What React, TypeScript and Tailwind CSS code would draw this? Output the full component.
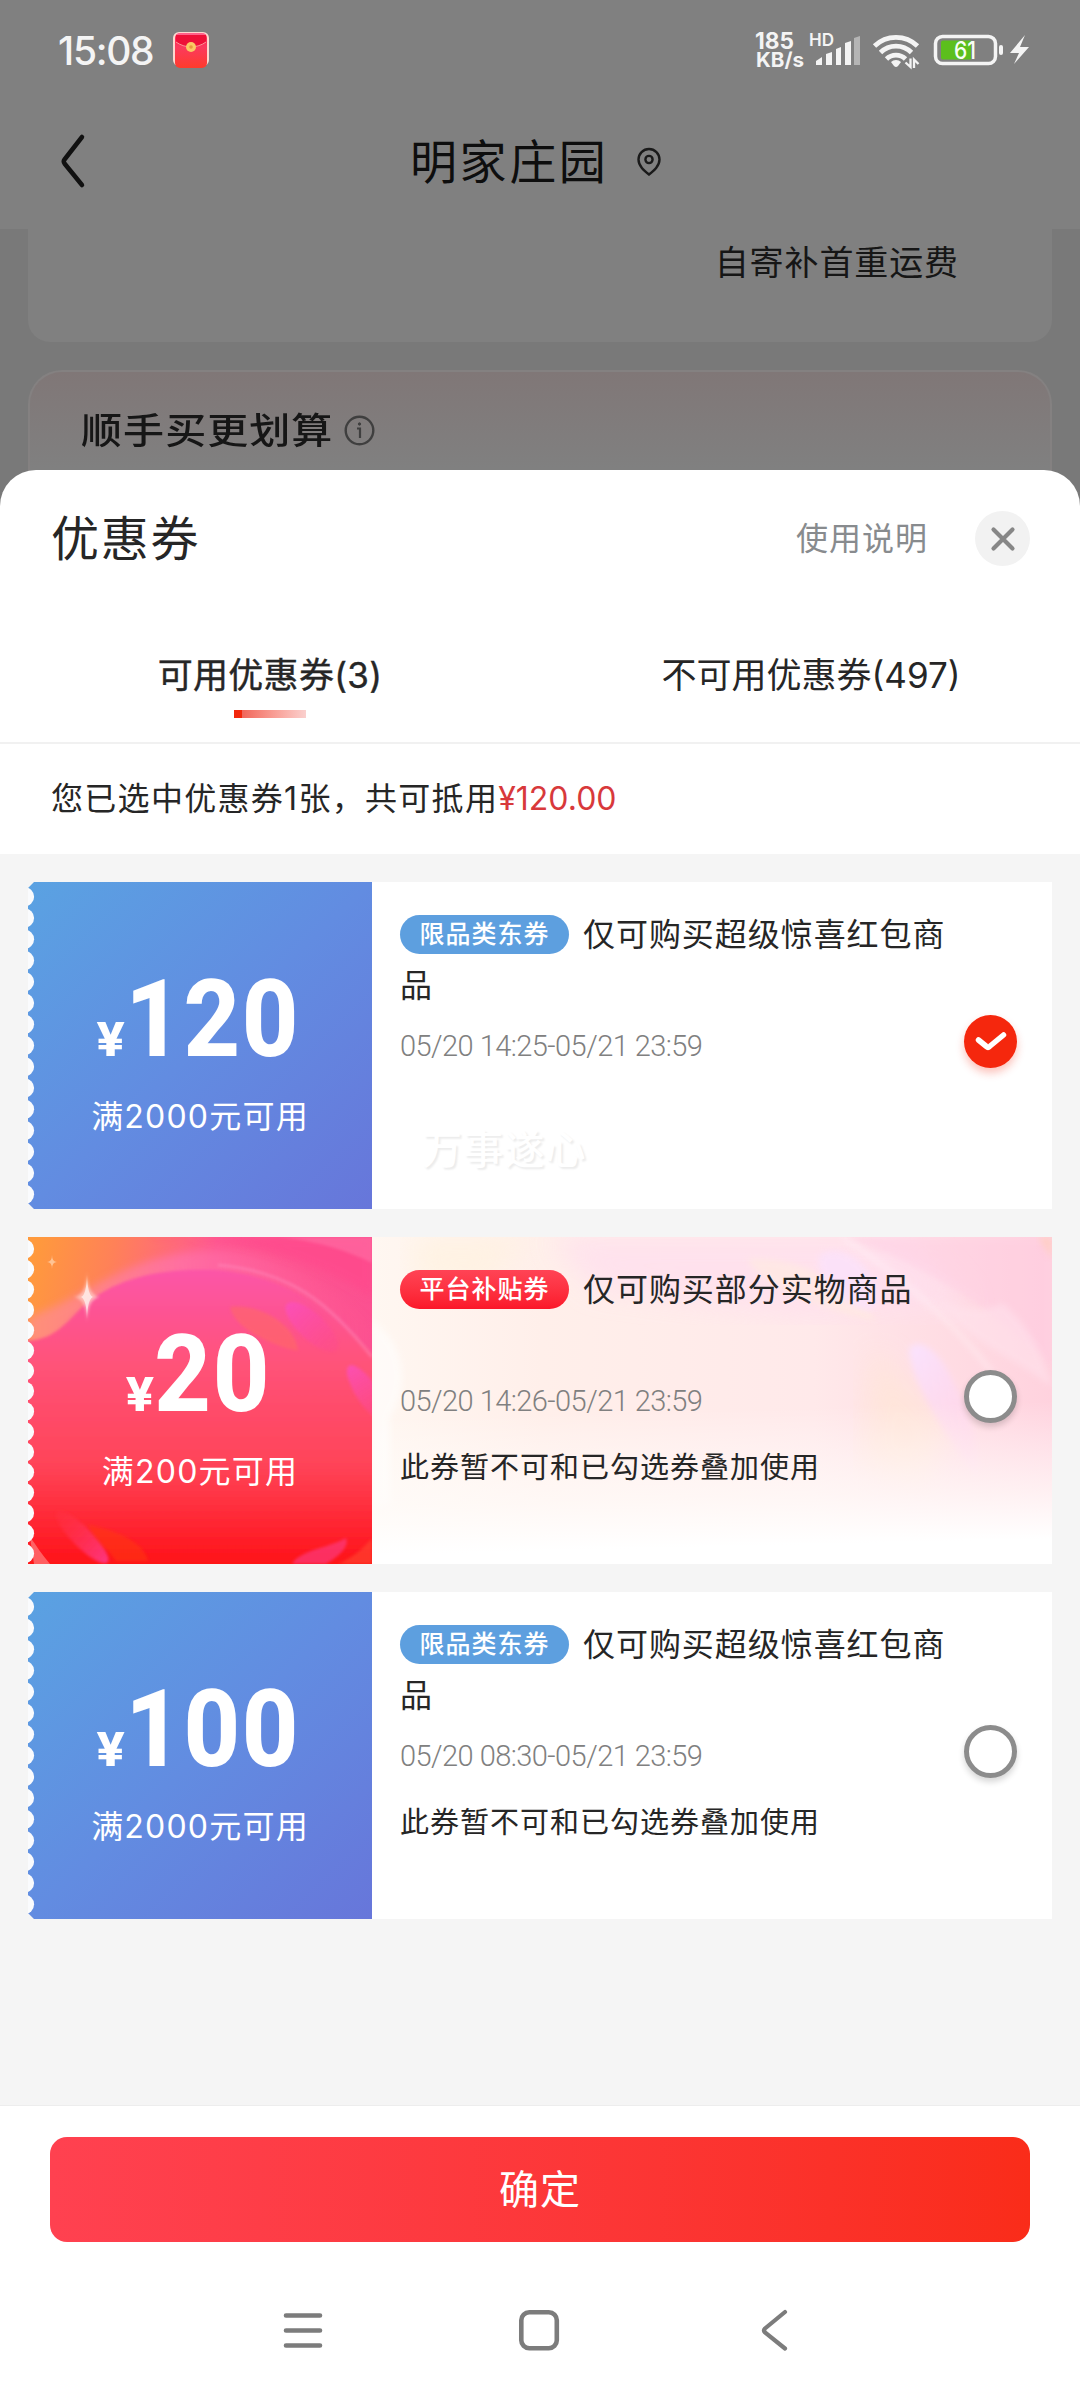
import { useId } from "react";

type Theme = "blue" | "red";

interface Coupon {
  id: number;
  theme: Theme;
  amount: string;
  threshold: string;
  tag: string;
  title: string;
  period: string;
  note?: string;
  selected?: boolean;
}

const coupons: Coupon[] = [
  {
    id: 1,
    theme: "blue",
    amount: "120",
    threshold: "满2000元可用",
    tag: "限品类东券",
    title: "仅可购买超级惊喜红包商品",
    period: "05/20 14:25-05/21 23:59",
    selected: true,
  },
  {
    id: 2,
    theme: "red",
    amount: "20",
    threshold: "满200元可用",
    tag: "平台补贴券",
    title: "仅可购买部分实物商品",
    period: "05/20 14:26-05/21 23:59",
    note: "此券暂不可和已勾选券叠加使用",
  },
  {
    id: 3,
    theme: "blue",
    amount: "100",
    threshold: "满2000元可用",
    tag: "限品类东券",
    title: "仅可购买超级惊喜红包商品",
    period: "05/20 08:30-05/21 23:59",
    note: "此券暂不可和已勾选券叠加使用",
  },
];

function StatusBar() {
  return (
    <div className="flex h-[100px] items-center justify-between pl-[58px] pr-[50px] text-[#f4f4f4]">
      <div className="flex items-center gap-[19px]">
        <span className="w-[96px] whitespace-nowrap text-[39px] font-medium leading-none tracking-[-1.300px]">15:08</span>
        <svg width="36" height="36" viewBox="0 0 36 36">
          <defs>
            <linearGradient id="envelope" x1="0" y1="0" x2="0" y2="1">
              <stop offset="0" stopColor="#ff1f4f" />
              <stop offset="0.4" stopColor="#fb3a5e" />
              <stop offset="1" stopColor="#ff3b2c" />
            </linearGradient>
          </defs>
          <rect width="36" height="34" rx="6" fill="#fdd9cf" />
          <rect x="2" y="1" width="32" height="35" rx="5" fill="url(#envelope)" />
          <path d="M3 3h30v7c-4 3-10 5-15 5S7 13 3 10z" fill="#ee1038" />
          <path d="M3 10c4 3 10 5 15 5s11-2 15-5" fill="none" stroke="#ffb0a8" strokeWidth="0.8" />
          <path d="M4 2h28" stroke="#ff9fc4" strokeWidth="1" />
          <circle cx="18" cy="15" r="5" fill="#fbc965" />
          <circle cx="18" cy="15" r="1.8" fill="#e99a3e" />
        </svg>
      </div>
      <svg className="overflow-visible" width="276" height="40" viewBox="754 30 276 40">
        <g fill="#f4f4f4" fontFamily="Inter, sans-serif" fontWeight="700">
          <text x="755" y="49" fontSize="22.500" textLength="39" lengthAdjust="spacingAndGlyphs">185</text>
          <text x="756" y="67" fontSize="20" textLength="48" lengthAdjust="spacingAndGlyphs">KB/s</text>
          <text x="809" y="46" fontSize="17" fontWeight="600" textLength="25" lengthAdjust="spacingAndGlyphs">HD</text>
        </g>
        <g fill="#f4f4f4">
          <path d="M816 65v-4l6-4v8z" />
          <path d="M826 65V54l6-2v13z" />
          <path d="M836 65V49l5-2v18z" />
          <path d="M845 65V43l6-2v24z" />
          <path d="M854 65V38l6-2v29z" fill="#b5b5b5" />
        </g>
        <g fill="none" stroke="#f4f4f4" strokeWidth="4.800">
          <path d="M874.500 46a31 31 0 0 1 43 0" />
          <path d="M880.500 52.500a22 22 0 0 1 31 0" />
          <path d="M886.500 59a13.500 13.500 0 0 1 19 0" />
        </g>
        <path d="M891 62a7 7 0 0 1 10 0l-3 4q-2 2-4 0z" fill="#f4f4f4" />
        <path d="M910.500 58.500V67l-5-4.500M914 68v-8.500l4.500 4.500" fill="none" stroke="#f4f4f4" strokeWidth="2.300" />
        <rect x="935.500" y="36.500" width="60" height="27" rx="7" fill="none" stroke="#f4f4f4" strokeWidth="3.500" />
        <path d="M943 40.500h28v19h-28a2 2 0 0 1-2-2v-15a2 2 0 0 1 2-2z" fill="#5cbf1c" />
        <rect x="999" y="45" width="4" height="10" rx="2" fill="#f4f4f4" />
        <path d="M1025 35l-15 18h9l-5 11 15-17h-9z" fill="#f4f4f4" />
        <text x="954" y="58.500" fontSize="24" fontWeight="500" fill="#f8fff4" fontFamily="Inter, sans-serif" textLength="22" lengthAdjust="spacingAndGlyphs">61</text>
      </svg>
    </div>
  );
}

function PageHeader() {
  return (
    <div className="flex h-[129px] items-center pb-[7px]">
      <svg className="ml-[58px]" width="28" height="56" viewBox="0 0 28 56">
        <path d="M24 4 6.500 26.500q-1.500 2 0 4L24 52" fill="none" stroke="#111" strokeWidth="4.500" strokeLinecap="round" />
      </svg>
      <h1 className="ml-[324px] w-[198px] whitespace-nowrap text-[47px] leading-none tracking-[2.600px] text-[#0e0e0e]">明家庄园</h1>
      <svg className="ml-[28px] mt-[2px]" width="26" height="30" viewBox="0 0 26 30">
        <path d="M13 27.500C8 23.500 2.500 19 2.500 12.500a10.500 10.500 0 0 1 21 0C23.500 19 18 23.500 13 27.500z" fill="none" stroke="#1a1a1a" strokeWidth="2.400" />
        <circle cx="13" cy="12.500" r="3.600" fill="none" stroke="#1a1a1a" strokeWidth="2.400" />
      </svg>
    </div>
  );
}

function OrderBackdrop() {
  return (
    <div className="flex h-[281px] flex-col gap-7 bg-[#797979] px-7">
      <div className="flex h-[113px] shrink-0 justify-end rounded-b-[22px] bg-[#808080] pr-[93px] pt-[17px]">
        <span className="text-[34px] leading-[34px] tracking-[0.9px] text-[#161616]">自寄补首重运费</span>
      </div>
      <div className="h-[140px] shrink-0 rounded-t-[34px] border-2 border-b-0 border-[#848181] bg-linear-to-b from-[#807777] to-[#808080] to-70% pl-[51px] pt-[41px]">
        <div className="flex items-center">
          <span className="w-[263px] origin-left scale-x-[1.14] whitespace-nowrap text-[36px] font-medium leading-[36px] tracking-[0.9px] text-[#161616]">
            顺手买更划算
          </span>
          <svg className="-mt-[2px]" width="31" height="31" viewBox="0 0 31 31" fill="none" stroke="#3f3f3f">
            <circle cx="15.500" cy="15.500" r="13.800" strokeWidth="2.400" />
            <path d="M13 13.500h3V23" strokeWidth="2.200" />
            <circle cx="15.500" cy="9" r="1.200" fill="#3f3f3f" strokeWidth="1" />
          </svg>
        </div>
      </div>
    </div>
  );
}

function SheetHeader() {
  return (
    <div className="flex h-[137px] items-center justify-between pl-[51px] pr-[50px]">
      <h2 className="text-[48px] leading-none tracking-[1.800px] text-[#262626]">优惠券</h2>
      <div className="flex items-center gap-[47px]">
        <span className="text-[32px] leading-none tracking-[1px] text-[#888b8e]">使用说明</span>
        <button className="flex size-[55px] items-center justify-center rounded-full bg-[#f2f2f2]">
          <svg width="26" height="26" viewBox="0 0 26 26">
            <path d="M3.500 3.500l19 19M22.500 3.500l-19 19" stroke="#878787" strokeWidth="4.200" strokeLinecap="round" />
          </svg>
        </button>
      </div>
    </div>
  );
}

function Tabs() {
  return (
    <div className="flex h-[137px] border-b-2 border-[#f1f1f1] pt-[50px] text-[35px] leading-[36px] text-[#262626]">
      <div className="flex w-1/2 flex-col items-center">
        <span className="tracking-[0.3px] [-webkit-text-stroke:0.4px_#262626]">可用优惠券(3)</span>
        <span className="mt-[17px] flex h-2 w-[72px]">
          <span className="w-2 bg-[#f2270c]" />
          <span className="flex-1 bg-linear-to-r from-[#f0655a] to-[#fad0ce]" />
        </span>
      </div>
      <div className="w-1/2 pl-[2px] text-center">不可用优惠券(497)</div>
    </div>
  );
}

// Torn left edge of a coupon
function Scallops({ count, pitch, first }: { count: number; pitch: number; first: number }) {
  return (
    <g fill="#fafbfd">
      {Array.from({ length: count }, (_, i) => (
        <circle key={i} cx={-3.5} cy={first + i * pitch} r={9.6} />
      ))}
    </g>
  );
}

function BlueArt() {
  const id = useId();
  return (
    <svg className="absolute inset-0" width="344" height="327" viewBox="0 0 344 327">
      <defs>
        <linearGradient id={id} x1="0" y1="0" x2="1" y2="1">
          <stop offset="0" stopColor="#5aa2e2" />
          <stop offset="0.5" stopColor="#628ce1" />
          <stop offset="1" stopColor="#6776da" />
        </linearGradient>
      </defs>
      <rect width="344" height="327" fill={`url(#${id})`} />
      <path d="M0 0h6l-6 6zM0 327h6l-6-6z" fill="#f5f5f5" />
      <Scallops count={15} pitch={21.26} first={14.7} />
    </svg>
  );
}

function RedArt() {
  return (
    <svg className="absolute inset-0" width="344" height="327" viewBox="0 0 344 327">
      <defs>
        <linearGradient id="outer" x1="0" y1="0.1" x2="1" y2="0.35">
          <stop offset="0" stopColor="#ff9a3c" />
          <stop offset="0.22" stopColor="#ff8158" />
          <stop offset="0.5" stopColor="#ff5a92" />
          <stop offset="1" stopColor="#fb5090" />
        </linearGradient>
        <linearGradient id="ball" x1="0" y1="0" x2="0" y2="1">
          <stop offset="0" stopColor="#fc54a8" />
          <stop offset="0.32" stopColor="#ff5278" />
          <stop offset="0.65" stopColor="#ff4358" />
          <stop offset="1" stopColor="#fe0f14" />
        </linearGradient>
        <linearGradient id="rim" x1="0" y1="0" x2="1" y2="0">
          <stop offset="0" stopColor="#ff8f8a" />
          <stop offset="0.45" stopColor="#ff72ac" />
          <stop offset="1" stopColor="#ff5590" stopOpacity="0.3" />
        </linearGradient>
        <linearGradient id="petal" x1="0" y1="0" x2="1" y2="0">
          <stop offset="0" stopColor="#fb4fc0" />
          <stop offset="1" stopColor="#fd4690" stopOpacity="0.35" />
        </linearGradient>
        <linearGradient id="petalLow" x1="0" y1="0" x2="1" y2="0">
          <stop offset="0" stopColor="#ff3a50" stopOpacity="0.2" />
          <stop offset="1" stopColor="#fd3f9c" />
        </linearGradient>
        <filter id="soft">
          <feGaussianBlur stdDeviation="4" />
        </filter>
        <filter id="softer">
          <feGaussianBlur stdDeviation="1.500" />
        </filter>
        <clipPath id="redFrame">
          <rect width="344" height="327" />
        </clipPath>
      </defs>
      <g clipPath="url(#redFrame)">
        <rect width="344" height="327" fill="url(#outer)" />
        <path d="M120 0C200-4 280 20 344 60V0z" fill="#ff4a8c" filter="url(#soft)" opacity="0.8" />
        <path d="M0 80C60 60 90 22 170 14c70-4 130 30 174 76v30H0z" fill="url(#rim)" filter="url(#soft)" opacity="0.75" />
        <path d="M250 0c40 4 70 14 94 26V0z" fill="#ff6aa2" filter="url(#softer)" opacity="0.7" />
        <path d="M-6 104c30 0 40-14 58-32C84 42 130 31 186 33c60 4 110 30 164 90v210H-6z" fill="url(#ball)" filter="url(#softer)" />
        <path d="M190 28c70 6 110 36 154 92" fill="none" stroke="#ff8fc0" strokeWidth="3" opacity="0.45" filter="url(#softer)" />
        <path d="M202 70c30-4 66 18 68 44-22-4-64-22-68-44z" fill="#ff6a62" opacity="0.55" filter="url(#softer)" />
        <ellipse cx="284" cy="90" rx="34" ry="13" transform="rotate(43 284 90)" fill="url(#petal)" filter="url(#softer)" opacity="0.8" />
        <ellipse cx="340" cy="157" rx="34" ry="11" transform="rotate(56 340 157)" fill="url(#petal)" filter="url(#softer)" opacity="0.8" />
        <ellipse cx="54" cy="300" rx="36" ry="10" transform="rotate(45 54 300)" fill="url(#petalLow)" filter="url(#softer)" opacity="0.8" />
        <path d="M60 288c24 4 56 16 60 36H88c-8-12-22-22-28-36z" fill="#ff3a10" opacity="0.5" filter="url(#softer)" />
        <path d="M264 327c8-14 36-16 54-26 4 10-10 20-20 26z" fill="#fb3f8e" opacity="0.6" filter="url(#softer)" />
        <path d="M310 327c14-6 24-14 34-26v26z" fill="#ff4a30" opacity="0.6" filter="url(#softer)" />
        <path d="M2 300c6 8 12 18 20 27H6z" fill="#ff7f80" opacity="0.7" />
      </g>
      <path d="M59 34q0 24 13 26-13 2-13 26 0-24-13-26 13-2 13-26z" fill="#ffe0d6" opacity="0.6" filter="url(#softer)" />
      <path d="M59 38q.6 20 6 22-5.400 2-6 22-.6-20-6-22 5.400-2 6-22z" fill="#fff" opacity="0.6" />
      <path d="M24 18q0 7 5 7-5 0-5 7 0-7-5-7 5 0 5-7z" fill="#ffd0a8" opacity="0.8" />
      <Scallops count={16} pitch={20.3} first={12} />
    </svg>
  );
}

// Washed-out artwork behind the text of the subsidy coupon
function PastelArt() {
  return (
    <svg className="absolute inset-0" width="680" height="327" viewBox="0 0 680 327">
      <defs>
        <linearGradient id="wash" x1="0" y1="0" x2="1" y2="0">
          <stop offset="0" stopColor="#fff7f1" />
          <stop offset="0.25" stopColor="#ffefea" />
          <stop offset="0.65" stopColor="#ffe9ea" />
          <stop offset="1" stopColor="#ffd2de" />
        </linearGradient>
        <linearGradient id="fade" x1="0" y1="0" x2="0.05" y2="1">
          <stop offset="0.55" stopColor="#fff" stopOpacity="0" />
          <stop offset="0.82" stopColor="#fffcfa" stopOpacity="0.7" />
          <stop offset="0.97" stopColor="#fff" stopOpacity="1" />
        </linearGradient>
        <linearGradient id="streak" x1="0" y1="0" x2="0.6" y2="1">
          <stop offset="0" stopColor="#fae3ff" />
          <stop offset="1" stopColor="#ffd0ee" stopOpacity="0.3" />
        </linearGradient>
        <filter id="haze">
          <feGaussianBlur stdDeviation="14" />
        </filter>
        <filter id="mist">
          <feGaussianBlur stdDeviation="3" />
        </filter>
      </defs>
      <rect width="680" height="327" fill="url(#wash)" />
      <path d="M180 0h360l60 70-160 10-220-30z" fill="#ffdfee" opacity="0.8" filter="url(#haze)" />
      <path d="M40 0h120L110 50 40 40z" fill="#fff2dc" opacity="0.6" filter="url(#haze)" />
      <path d="M500 110l80 80-30 60-60-20z" fill="#ffe6d8" opacity="0.8" filter="url(#haze)" />
      <path d="M470 0c70 20 150 70 210 130V0z" fill="#ffc9e2" opacity="0.4" filter="url(#mist)" />
      <path d="M375 22c50-4 100 24 130 62-50-10-110-30-130-62z" fill="#ffeedd" opacity="0.5" filter="url(#mist)" />
      <path d="M448 18c16-10 38 0 50 20 14 20 10 38-8 34-24-8-50-36-42-54z" fill="#fbe2fb" opacity="0.8" filter="url(#mist)" />
      <path d="M470 0c60 40 120 90 160 150" fill="none" stroke="#fff" strokeWidth="4" opacity="0.35" filter="url(#mist)" />
      <path d="M537 112c10-14 32 4 44 32 16 32 30 66 24 96-24-34-64-86-68-128z" fill="url(#streak)" filter="url(#mist)" />
      <path d="M560 60c30 12 50 18 70 6 20 14 40 46 50 84-40-30-90-50-120-90z" fill="#ffe4ee" opacity="0.5" filter="url(#mist)" />
      <path d="M666 0h14v22z" fill="#ffcfc0" opacity="0.8" filter="url(#mist)" />
      <path d="M8 90c24 20 30 60 10 90v90H0V80z" fill="#fff" opacity="0.55" filter="url(#mist)" />
      <rect width="680" height="327" fill="url(#fade)" />
    </svg>
  );
}

function Radio({ checked }: { checked?: boolean }) {
  if (checked) {
    return (
      <span className="flex size-[53px] items-center justify-center rounded-full bg-[#f5270d] shadow-[0_5px_8px_rgba(245,39,13,0.28)]">
        <svg width="32" height="24" viewBox="0 0 32 24">
          <path d="M3.500 10l8 6.500q1.500 1.500 3 0L28.500 5" fill="none" stroke="#fff" strokeWidth="5.500" strokeLinecap="round" strokeLinejoin="round" />
        </svg>
      </span>
    );
  }
  return <span className="block size-[53px] rounded-full border-5 border-[#8c8c8c] bg-white shadow-[0_4px_6px_rgba(0,0,0,0.16)]" />;
}

function CouponCard({ coupon }: { coupon: Coupon }) {
  const red = coupon.theme === "red";
  return (
    <div className="flex h-[327px] bg-white">
      <div className="relative w-[344px] shrink-0 overflow-hidden">
        {red ? <RedArt /> : <BlueArt />}
        <div className="relative flex h-full flex-col items-center text-white">
          <div className="mt-[82px] flex h-[110px] scale-x-[0.91] items-baseline font-[Roboto] font-extrabold leading-[110px]">
            <span className="mr-[3px] inline-block scale-x-[1.2] text-[48px]">¥</span>
            <span className="text-[108px] tracking-[1.800px]">{coupon.amount}</span>
          </div>
          <div className="mt-[25px] text-[32px] leading-[36px] tracking-[1.200px]">{coupon.threshold}</div>
        </div>
      </div>
      <div className="relative flex flex-1 overflow-hidden">
        {red && <PastelArt />}
        <div className="relative w-[584px] shrink-0 pl-7 pt-[27px]">
          <div className="h-[103px] text-[32px] leading-[51px] tracking-[0.950px] text-[#262626]">
            <span
              className={`-my-3 mr-[14px] inline-flex h-[39px] w-[169px] items-center justify-center rounded-full align-[3px] text-[25px] font-medium leading-none text-white ${
                red ? "bg-linear-to-b from-[#ff4355] to-[#fb1629]" : "bg-[#5d9fdf]"
              }`}
            >
              {coupon.tag}
            </span>
            {coupon.title}
          </div>
          <div className="mt-[17px] whitespace-pre font-[Roboto] text-[29px] font-light leading-[34px] tracking-[-0.550px] text-[#808080]">
            {coupon.period}
          </div>
          {coupon.note && (
            <div className="mt-[31px] whitespace-nowrap text-[29px] leading-[38px] tracking-[1px] text-[#262626]">{coupon.note}</div>
          )}
          {coupon.selected && (
            <div className="mt-[63px] pl-[22px] text-[40px] font-medium leading-[48px] tracking-[1.200px] text-white [text-shadow:2px_2px_2px_#ececec]">
              万事遂心
            </div>
          )}
        </div>
        <div className="relative pl-2 pt-[133px]">
          <Radio checked={coupon.selected} />
        </div>
      </div>
    </div>
  );
}

function NavBar() {
  return (
    <div className="flex h-[158px] items-start pl-[283px] pt-[66px]">
      <svg width="40" height="44" viewBox="0 0 40 44">
        <path d="M3 7.500h34M3 22.500h34M3 37.500h34" stroke="#7c7c7c" strokeWidth="4.600" strokeLinecap="round" />
      </svg>
      <svg className="ml-[194px]" width="44" height="44" viewBox="0 0 44 44">
        <rect x="4.300" y="4.300" width="35.500" height="36" rx="8" fill="none" stroke="#7c7c7c" strokeWidth="4.600" />
      </svg>
      <svg className="ml-[198px]" width="32" height="44" viewBox="0 0 32 44">
        <path d="M26 4L6 20.500q-2 2 0 4L26 40.500" fill="none" stroke="#7c7c7c" strokeWidth="4.200" strokeLinecap="round" />
      </svg>
    </div>
  );
}

export default function App() {
  return (
    <div className="flex h-[2400px] w-[1080px] flex-col overflow-hidden bg-[#808080] font-[Inter,'Noto_Sans_CJK_SC',sans-serif]">
      <StatusBar />
      <PageHeader />
      <OrderBackdrop />
      <div className="relative z-10 -mt-10 flex flex-1 flex-col overflow-hidden rounded-t-[36px] bg-white">
        <SheetHeader />
        <Tabs />
        <div className="flex h-[110px] items-center pl-[51px] text-[32px] leading-none tracking-[1.300px] text-[#262626]">
          您已选中优惠券1张，共可抵用
          <span className="tracking-[0px] text-[#d8393b]">¥120.00</span>
        </div>
        <div className="flex flex-1 flex-col gap-7 bg-[#f5f5f5] px-7 pt-7">
          {coupons.map((coupon) => (
            <CouponCard key={coupon.id} coupon={coupon} />
          ))}
        </div>
        <div className="border-t border-[#ededed] px-[50px] pt-[31px]">
          <button className="flex h-[105px] w-full items-center justify-center rounded-[17px] bg-linear-to-r from-[#ff4150] to-[#fa2c19] text-[40px] leading-none tracking-[1px] text-white">
            确定
          </button>
        </div>
        <NavBar />
      </div>
    </div>
  );
}
